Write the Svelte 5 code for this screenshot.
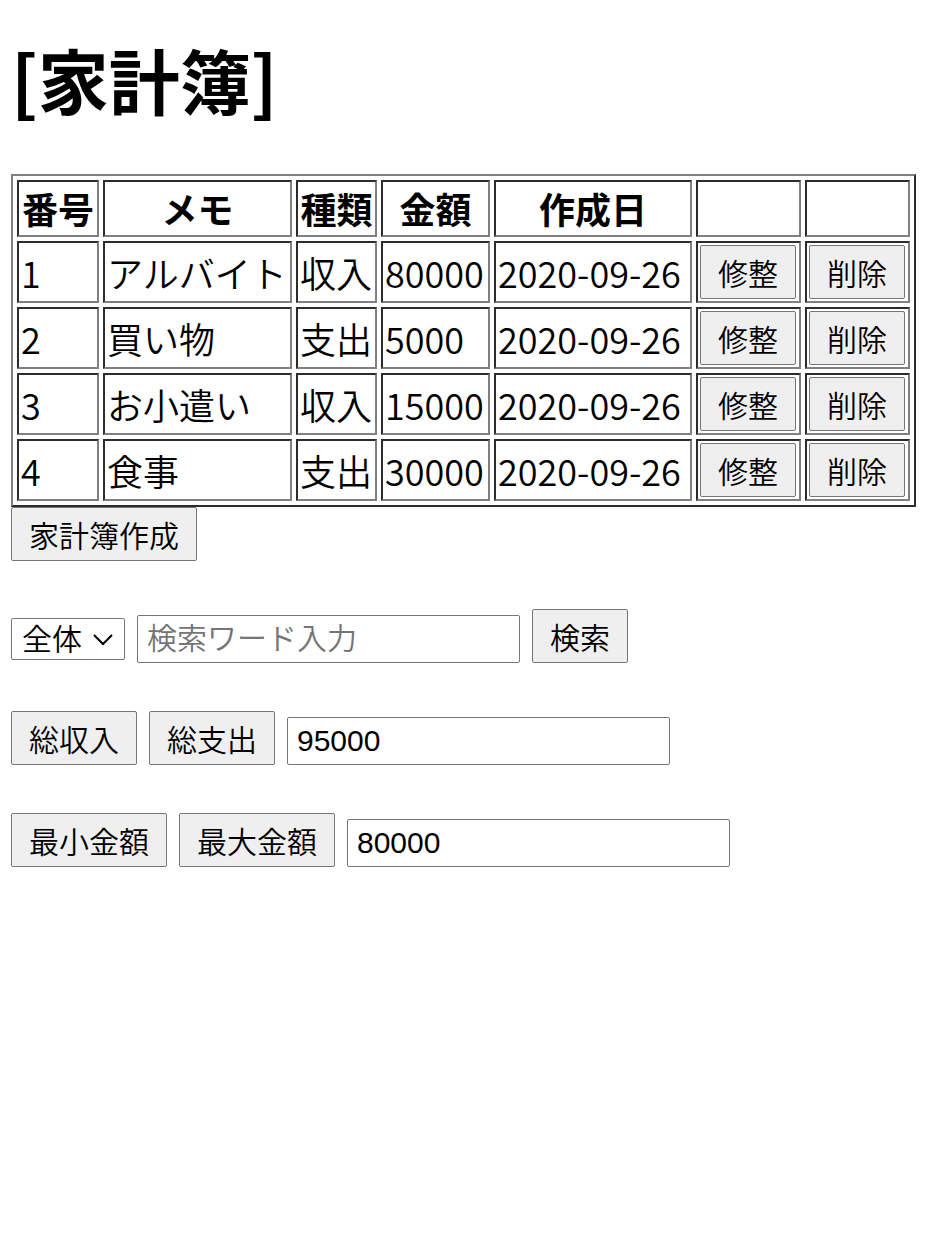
<script>
  const entries = [
    { id: 1, memo: 'アルバイト', kind: '収入', amount: 80000, date: '2020-09-26' },
    { id: 2, memo: '買い物', kind: '支出', amount: 5000, date: '2020-09-26' },
    { id: 3, memo: 'お小遣い', kind: '収入', amount: 15000, date: '2020-09-26' },
    { id: 4, memo: '食事', kind: '支出', amount: 30000, date: '2020-09-26' },
  ];
  let filter = $state('全体');
  let keyword = $state('');
  let total = $state('95000');
  let extreme = $state('80000');

  const sum = (kind) =>
    String(entries.filter((e) => e.kind === kind).reduce((a, e) => a + e.amount, 0));
  const amounts = entries.map((e) => e.amount);
</script>

<main>
  <h1>[家計簿]</h1>

  <table>
    <colgroup>
      <col class="number" /><col class="memo" /><col class="kind" /><col class="amount" />
      <col class="date" /><col class="action" /><col class="action" />
    </colgroup>
    <thead>
      <tr>
        <th>番号</th><th>メモ</th><th>種類</th><th>金額</th><th>作成日</th><th></th><th></th>
      </tr>
    </thead>
    <tbody>
      {#each entries as entry (entry.id)}
        <tr>
          <td>{entry.id}</td>
          <td>{entry.memo}</td>
          <td>{entry.kind}</td>
          <td>{entry.amount}</td>
          <td>{entry.date}</td>
          <td><button type="button">修整</button></td>
          <td><button type="button">削除</button></td>
        </tr>
      {/each}
    </tbody>
  </table>

  <div class="row"><button type="button">家計簿作成</button></div>

  <form class="row" onsubmit={(e) => e.preventDefault()}>
    <span class="select">
      <select bind:value={filter} aria-label="種類">
        <option>全体</option>
        <option>収入</option>
        <option>支出</option>
      </select>
      <svg viewBox="0 0 20 12" aria-hidden="true"><path d="M1 1 10 10 19 1" /></svg>
    </span>
    <input type="text" bind:value={keyword} placeholder="検索ワード入力" aria-label="検索ワード入力" />
    <button type="submit">検索</button>
  </form>

  <div class="row">
    <button type="button" onclick={() => (total = sum('収入'))}>総収入</button>
    <button type="button" onclick={() => (total = sum('支出'))}>総支出</button>
    <input type="text" bind:value={total} aria-label="合計" />
  </div>

  <div class="row">
    <button type="button" onclick={() => (extreme = String(Math.min(...amounts)))}>最小金額</button>
    <button type="button" onclick={() => (extreme = String(Math.max(...amounts)))}>最大金額</button>
    <input type="text" bind:value={extreme} aria-label="金額" />
  </div>
</main>

<style>
  :global(body) {
    background: #fff;
  }
  main {
    padding: 28px 11px;
    color: #000;
    font-family: 'Noto Sans CJK JP', sans-serif;
    font-size: 36px;
    font-weight: 350;
  }
  h1 {
    margin: 0 0 46px;
    font-size: 71px;
    line-height: 100px;
    font-weight: 700;
  }
  table {
    border: 2px solid;
    border-color: #808080 #2c2c2c #2c2c2c #808080;
    border-collapse: separate;
    border-spacing: 4px;
    white-space: nowrap;
    line-height: 49px;
  }
  th,
  td {
    padding: 2px;
    border: 2px solid;
    border-color: #2c2c2c #808080 #808080 #2c2c2c;
    text-align: left;
    vertical-align: middle;
  }
  th {
    font-weight: 700;
    text-align: center;
  }
  .number { width: 82px; }
  .memo { width: 189px; }
  .kind { width: 81px; }
  .amount { width: 109px; }
  .date { width: 198px; }
  .action { width: 105px; }
  td button {
    display: block;
  }
  .row {
    display: flex;
    flex-wrap: wrap;
    align-items: flex-end;
    gap: 12px;
    margin-bottom: 48px;
  }
  button,
  input,
  select {
    box-sizing: border-box;
    margin: 0;
    border: 1px solid #767676;
    border-radius: 2px;
    color: #000;
    font-size: 30px;
    font-weight: inherit;
  }
  button {
    height: 54px;
    padding: 0 17px;
    background: #efefef;
    font-family: inherit;
    line-height: 52px;
    white-space: nowrap;
  }
  input {
    width: 383px;
    height: 48px;
    padding: 0 9px;
    background: #fff;
    font-family: 'Liberation Sans', 'Noto Sans CJK JP', sans-serif;
  }
  input::placeholder {
    color: #757575;
    opacity: 1;
  }
  .select {
    position: relative;
    display: flex;
    margin-bottom: 3px;
  }
  select {
    appearance: none;
    height: 42px;
    padding: 0 42px 4px 10px;
    background: #fff;
    font-family: inherit;
    line-height: 36px;
  }
  .select svg {
    position: absolute;
    right: 12px;
    top: 16px;
    width: 20px;
    height: 12px;
    fill: none;
    stroke: #000;
    stroke-width: 2;
    pointer-events: none;
  }
</style>
